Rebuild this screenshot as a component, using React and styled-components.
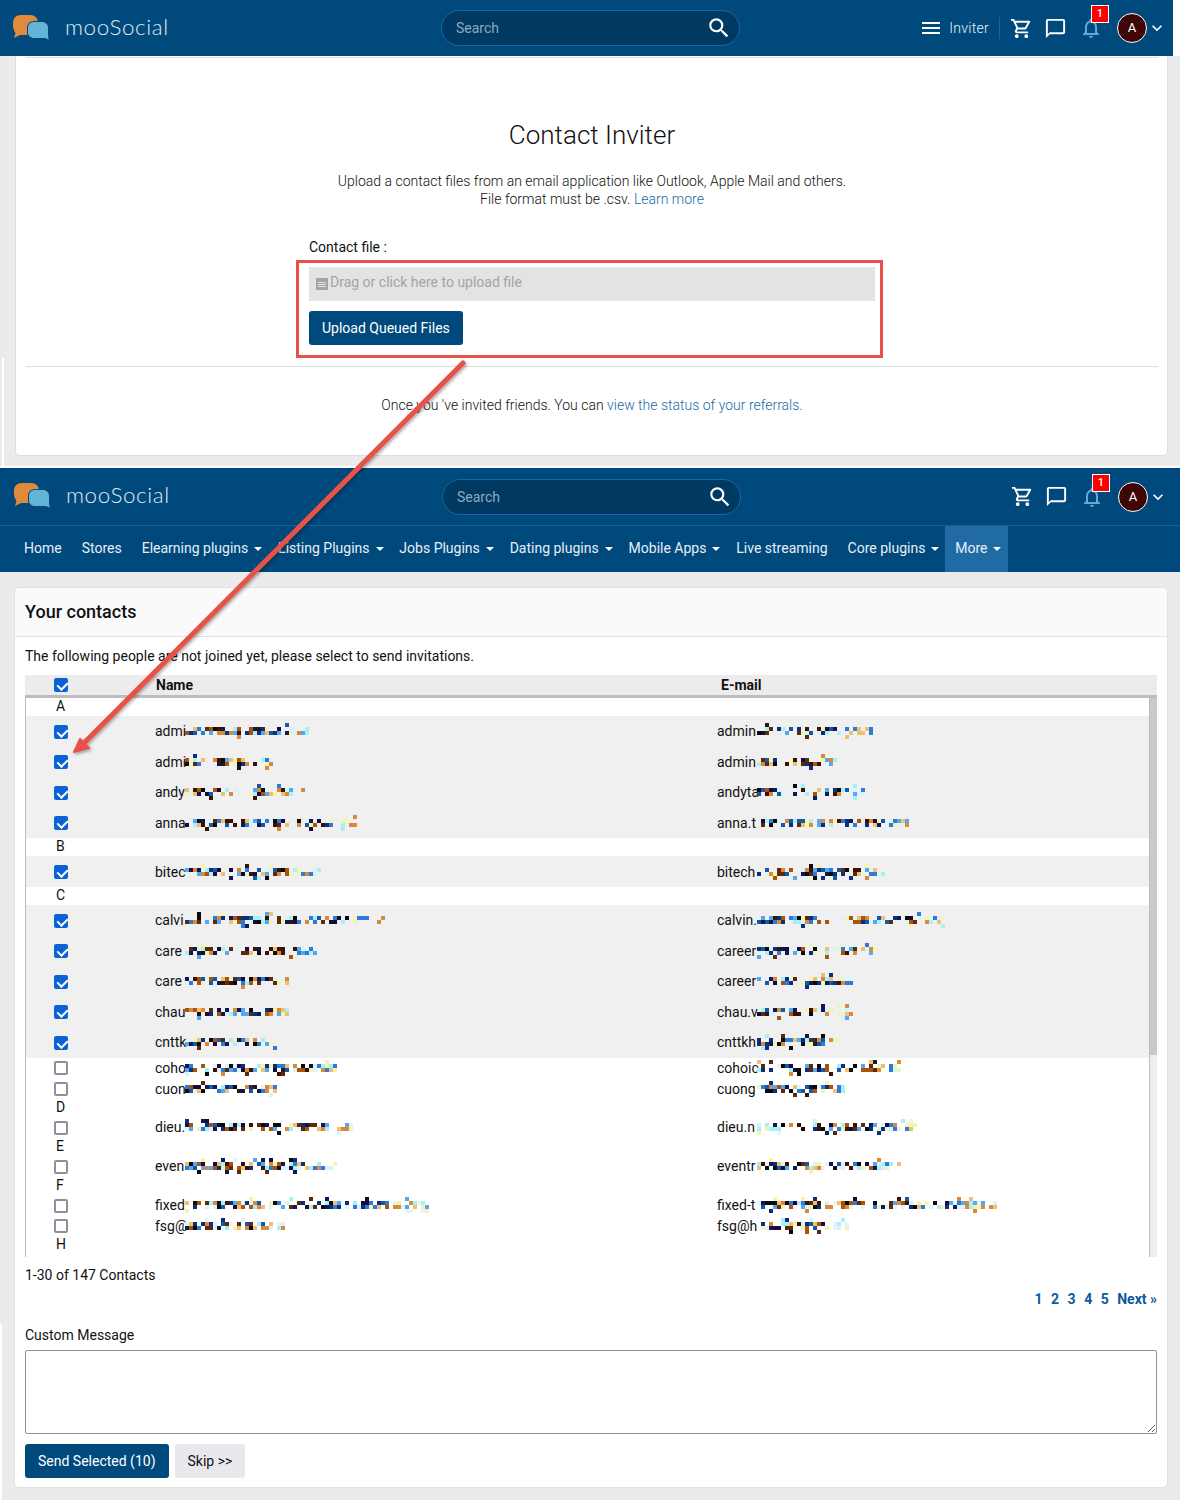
import React from 'react';
import styled, { createGlobalStyle } from 'styled-components';
import {
    MdMenu,
    MdOutlineShoppingCart,
    MdChatBubbleOutline,
    MdNotificationsNone,
    MdSearch,
    MdKeyboardArrowDown,
} from 'react-icons/md';

const navItems = [
    { label: 'Home' },
    { label: 'Stores' },
    { label: 'Elearning plugins', caret: true },
    { label: 'Listing Plugins', caret: true },
    { label: 'Jobs Plugins', caret: true },
    { label: 'Dating plugins', caret: true },
    { label: 'Mobile Apps', caret: true },
    { label: 'Live streaming' },
    { label: 'Core plugins', caret: true },
    { label: 'More', caret: true, active: true },
];

// g = group letter, otherwise visible name part + mosaic width, visible email part + mosaic width
const rows = [
    { g: 'A' },
    { n: 'admi', nw: 126, e: 'admin', ew: 116, on: true },
    { n: 'admi', nw: 88, e: 'admin', ew: 80, on: true },
    { n: 'andy', nw: 120, e: 'andyta', ew: 108, on: true },
    { n: 'anna', nw: 176, e: 'anna.t', ew: 152, on: true },
    { g: 'B' },
    { n: 'bitec', nw: 136, e: 'bitech', ew: 128, on: true },
    { g: 'C' },
    { n: 'calvi', nw: 200, e: 'calvin.', ew: 192, on: true },
    { n: 'care', nw: 132, e: 'career', ew: 120, on: true },
    { n: 'care', nw: 108, e: 'career', ew: 100, on: true },
    { n: 'chau', nw: 104, e: 'chau.v', ew: 96, on: true },
    { n: 'cnttk', nw: 92, e: 'cnttkh', ew: 80, on: true },
    { n: 'coho', nw: 152, e: 'cohoic', ew: 144 },
    { n: 'cuon', nw: 92, e: 'cuong', ew: 88 },
    { g: 'D' },
    { n: 'dieu.', nw: 168, e: 'dieu.n', ew: 160 },
    { g: 'E' },
    { n: 'even', nw: 152, e: 'eventr', ew: 144 },
    { g: 'F' },
    { n: 'fixed', nw: 244, e: 'fixed-t', ew: 240 },
    { n: 'fsg@', nw: 100, e: 'fsg@h', ew: 92 },
    { g: 'H' },
];

const darks = ['#0a1a55', '#1a0a3a', '#3a1205', '#0a0a0a', '#0b2f7a', '#1459a8', '#5c2a08', '#a8550a'];
const lights = ['#2c7bd6', '#55a8f0', '#d88a3a', '#f0c070', '#a8f0f8', '#d8f4f8', '#f4f4b0', '#e8f4f4'];

// the blurred part of names and addresses, pseudo random so each one differs
function Mosaic({ width, seed }) {
    let s = seed * 7919 + width * 31 + 17;
    const next = () => {
        s = (s * 16807) % 2147483647;
        return (s % 1000) / 1000;
    };
    const density = [0.07, 0.66, 0.72, 0.09];
    const cells = [];
    for (let y = 0; y < 4; y++) {
        for (let x = 0; x < width; x += 4) {
            const tail = x > width * 0.82;
            const pool = tail || next() < 0.45 ? lights : darks;
            const color = pool[Math.floor(next() * pool.length)];
            if (next() < density[y]) {
                cells.push(<rect key={x + '-' + y} x={x} y={y * 4} width="4" height="4" fill={color} />);
            }
        }
    }
    return (
        <MosaicSvg width={width} height="16" viewBox={`0 0 ${width} 16`}>
            {cells}
        </MosaicSvg>
    );
}

function Logo() {
    return (
        <svg width="37" height="27" viewBox="0 0 37 27">
            <path d="M8 0h9c5 0 8 3 8 8v4c0 5-3 8-8 8H7l-6 3 1.500-5C1 16 0 13 0 11V8c0-5 3-8 8-8z" fill="#e08a3c" />
            <path d="M21 6h8c4 0 7 3 7 6.500V19c0 1.500 0 4 1 7l-5-2H21c-4 0-7-3-7-6.500v-5C14 9 17 6 21 6z" fill="#00497d" />
            <path d="M21 7h8c3.500 0 6 2.500 6 5.500V19c0 1.500.3 3.500.8 5.500L32 23H21c-3.500 0-6-2.500-6-5.500v-5C15 9.500 17.500 7 21 7z" fill="#63b5d6" />
        </svg>
    );
}

function Header({ inviter, $second }) {
    return (
        <HeaderBar $second={$second}>
            <Brand>
                <Logo />
                <Wordmark>mooSocial</Wordmark>
            </Brand>
            <SearchBox>
                <SearchInput placeholder="Search" />
                <MdSearch size={26} color="#fff" />
            </SearchBox>
            <HeaderRight>
                {inviter && (
                    <InviterLink>
                        <MdMenu size={24} />
                        <span>Inviter</span>
                    </InviterLink>
                )}
                <IconLink $gap={11}><MdOutlineShoppingCart size={23} /></IconLink>
                <IconLink $gap={12}><MdChatBubbleOutline size={23} /></IconLink>
                <BellLink>
                    <MdNotificationsNone size={24} />
                    <Badge>1</Badge>
                </BellLink>
                <Avatar>A</Avatar>
                <MdKeyboardArrowDown size={20} color="#fff" />
            </HeaderRight>
        </HeaderBar>
    );
}

function ContactRow({ row, seed }) {
    return (
        <Row $on={row.on}>
            <CheckCell><Check type="checkbox" defaultChecked={!!row.on} /></CheckCell>
            <NameCell>
                <Prefix>{row.n}</Prefix>
                <Mosaic width={row.nw} seed={seed} />
            </NameCell>
            <EmailCell>
                <EmailPrefix>{row.e}</EmailPrefix>
                <Mosaic width={row.ew} seed={seed + 40} />
            </EmailCell>
        </Row>
    );
}

export default function App() {
    return (
        <Page>
            <GlobalStyle />
            <TopScreen>
                <Header inviter />
                <InviterCard>
                    <TopRule />
                    <InviterTitle>Contact Inviter</InviterTitle>
                    <Intro>
                        Upload a contact files from an email application like Outlook, Apple Mail and others.<br />
                        File format must be .csv. <TextLink>Learn more</TextLink>
                    </Intro>
                    <UploadForm>
                        <FieldLabel>Contact file :</FieldLabel>
                        <DropZone>
                            <FileIcon><i /><i /><i /></FileIcon>
                            Drag or click here to upload file
                        </DropZone>
                        <PrimaryButton>Upload Queued Files</PrimaryButton>
                        <RedOutline />
                    </UploadForm>
                    <Rule />
                    <StatusLine>
                        Once you 've invited friends. You can <TextLink>view the status of your referrals.</TextLink>
                    </StatusLine>
                </InviterCard>
            </TopScreen>

            <Header $second />
            <NavBar>
                {navItems.map((item) => (
                    <NavItem key={item.label} $active={item.active} $caret={item.caret}>
                        {item.label}
                        {item.caret && <Caret />}
                    </NavItem>
                ))}
            </NavBar>

            <ContactsCard>
                <CardHead>Your contacts</CardHead>
                <CardBody>
                    <Lead>The following people are not joined yet, please select to send invitations.</Lead>
                    <TableHead>
                        <CheckCell><Check type="checkbox" defaultChecked /></CheckCell>
                        <HeadName>Name</HeadName>
                        <HeadEmail>E-mail</HeadEmail>
                    </TableHead>
                    <ListBox>
                        <RowList>
                            {rows.map((row, i) =>
                                row.g ? (
                                    <GroupRow key={row.g}>{row.g}</GroupRow>
                                ) : (
                                    <ContactRow key={i} row={row} seed={i + 1} />
                                )
                            )}
                        </RowList>
                        <ScrollTrack><ScrollThumb /></ScrollTrack>
                    </ListBox>
                    <Count>1-30 of 147 Contacts</Count>
                    <Pager>
                        <a>1</a><a>2</a><a>3</a><a>4</a><a>5</a><a>Next »</a>
                    </Pager>
                    <MessageLabel>Custom Message</MessageLabel>
                    <MessageBox />
                    <Actions>
                        <PrimaryButton>Send Selected (10)</PrimaryButton>
                        <GreyButton>Skip &gt;&gt;</GreyButton>
                    </Actions>
                </CardBody>
            </ContactsCard>

            <Sliver $top={358} $height={108} $left={2} />
            <Sliver $top={1324} $height={176} $left={0} />
            <Annotation width="1180" height="1500" viewBox="0 0 1180 1500">
                <g filter="url(#arrow-shadow)">
                    <path d="M463 363 L82 745" stroke="#e8514a" strokeWidth="5" strokeLinecap="round" />
                    <path d="M74 752 L80 739 L89 748 Z" fill="#e8514a" stroke="#e8514a" strokeWidth="2" strokeLinejoin="round" />
                </g>
                <defs>
                    <filter id="arrow-shadow" x="-5%" y="-5%" width="110%" height="110%">
                        <feDropShadow dx="1.500" dy="1.500" stdDeviation="1.500" floodColor="#000" floodOpacity="0.35" />
                    </filter>
                </defs>
            </Annotation>
        </Page>
    );
}

const GlobalStyle = createGlobalStyle`
    html, body {
        margin: 0;
        background: #ebebeb;
    }
    * {
        box-sizing: border-box;
    }
    body {
        font-family: Roboto, "Liberation Sans", sans-serif;
        font-size: 14px;
        line-height: 18px;
        color: #111;
    }
`;

const Page = styled.div`
    position: relative;
    width: 1180px;
    height: 1500px;
    overflow: hidden;
`;

const TopScreen = styled.div`
    height: 468px;
    border-bottom: 2px solid #fff;
    background: linear-gradient(#fff 56px, #ebebeb 56px);
`;

const HeaderBar = styled.header`
    display: flex;
    align-items: center;
    height: ${(p) => (p.$second ? '58px' : '56px')};
    width: ${(p) => (p.$second ? '1180px' : '1173px')};
    padding: ${(p) => (p.$second ? '0 12px 0 14px' : '0 6px 0 13px')};
    background: #00497d;
    border-bottom: ${(p) => (p.$second ? '1px solid #1c5f92' : 'none')};
`;

const Brand = styled.div`
    display: flex;
    align-items: center;
    gap: 15px;
    width: 428px;
`;

const Wordmark = styled.span`
    padding-bottom: 3px;
    font-family: Lato, sans-serif;
    font-weight: 300;
    font-size: 22.400px;
    letter-spacing: 0.6px;
    color: #e2eaf0;
`;

const SearchBox = styled.div`
    display: flex;
    align-items: center;
    justify-content: space-between;
    width: 299px;
    height: 36px;
    padding: 0 7px 0 14px;
    background: #003a63;
    border: 1px solid #1c659e;
    border-radius: 18px;
`;

const SearchInput = styled.input`
    flex: 1;
    padding: 0;
    border: 0;
    outline: 0;
    background: transparent;
    font: 14px Roboto, sans-serif;
    color: #fff;
    &::placeholder {
        color: #8fa9bd;
        opacity: 1;
    }
`;

const HeaderRight = styled.div`
    display: flex;
    align-items: center;
    margin-left: auto;
    color: #fff;
`;

const InviterLink = styled.div`
    display: flex;
    align-items: center;
    gap: 6px;
    height: 22px;
    margin-right: 10px;
    padding-right: 10px;
    border-right: 1px solid #1c659e;
    color: #eef3f7;
    font-weight: 300;
    letter-spacing: 0.3px;
    svg {
        color: #fff;
    }
`;

const IconLink = styled.span`
    display: flex;
    margin-right: ${(p) => p.$gap}px;
`;

const BellLink = styled.span`
    position: relative;
    display: flex;
    margin-right: 14px;
    color: #6aa5d2;
`;

const Badge = styled.span`
    position: absolute;
    top: -11px;
    left: 12px;
    width: 18px;
    height: 18px;
    background: #f00;
    border: 1px solid #fff;
    color: #fff;
    font-size: 11px;
    line-height: 16px;
    font-weight: 500;
    text-align: center;
`;

const Avatar = styled.span`
    width: 30px;
    height: 30px;
    border-radius: 50%;
    background: #3f0606;
    border: 1px solid #fff;
    color: #fff;
    font-size: 13px;
    line-height: 28px;
    text-align: center;
`;

const InviterCard = styled.section`
    height: 400px;
    margin: 0 12px 0 15px;
    padding: 1px 9px 0 10px;
    background: #fff;
    border: 1px solid #ddd;
    border-top: 0;
    border-radius: 0 0 5px 5px;
`;

const TopRule = styled.div`
    height: 1px;
    background: #ddd;
`;

const InviterTitle = styled.h1`
    margin: 62px 0 0;
    font-size: 26px;
    line-height: 30px;
    font-weight: 300;
    text-align: center;
`;

const Intro = styled.p`
    margin: 22px 0 0;
    font-weight: 300;
    text-align: center;
`;

const TextLink = styled.a`
    color: #1a6aa5;
`;

const UploadForm = styled.div`
    position: relative;
    width: 566px;
    margin: 30px 0 0 283px;
`;

const FieldLabel = styled.div`
    margin-bottom: 11px;
`;

const DropZone = styled.div`
    display: flex;
    align-items: center;
    height: 34px;
    margin-bottom: 10px;
    padding: 0 7px 4px;
    background: #e3e3e3;
    color: #a4a4a4;
`;

const FileIcon = styled.span`
    display: flex;
    flex-direction: column;
    justify-content: center;
    gap: 1px;
    width: 12px;
    height: 12px;
    margin: 4px 2px 0 0;
    padding: 0 2px;
    background: #a4a4a4;
    i {
        height: 1px;
        background: #e3e3e3;
    }
`;

const PrimaryButton = styled.button`
    height: 34px;
    padding: 0 13px 1px;
    background: #00497d;
    border: 0;
    border-radius: 3px;
    color: #fff;
    font: 14px Roboto, sans-serif;
`;

const GreyButton = styled(PrimaryButton)`
    background: #e9e9ed;
    color: #111;
`;

const RedOutline = styled.div`
    position: absolute;
    left: -13px;
    right: -8px;
    top: 22px;
    bottom: -13px;
    border: 3px solid #e8514a;
`;

const Rule = styled.hr`
    height: 1px;
    margin: 21px 0 0;
    border: 0;
    background: #ddd;
`;

const StatusLine = styled.p`
    margin: 29px 0 0;
    font-weight: 300;
    text-align: center;
`;

const NavBar = styled.nav`
    display: flex;
    height: 46px;
    padding-left: 14px;
    background: #00497d;
`;

const NavItem = styled.a`
    display: flex;
    align-items: center;
    padding: ${(p) => (p.$active ? '0 7px 2px 10px' : p.$caret ? '0 5.850px 2px 10px' : '0 10px 2px')};
    background: ${(p) => (p.$active ? '#216ba5' : 'transparent')};
    color: #e8eff5;
`;

const Caret = styled.i`
    width: 0;
    height: 0;
    margin: 2px 0 0 6px;
    border-left: 4.500px solid transparent;
    border-right: 4.500px solid transparent;
    border-top: 4.500px solid #fff;
`;

const ContactsCard = styled.section`
    height: 901px;
    margin: 15px 12px 0 14px;
    background: #fff;
    border: 1px solid #e2e2e2;
    border-radius: 5px;
`;

const CardHead = styled.h2`
    height: 49px;
    margin: 0;
    padding: 0 10px;
    background: #fafafa;
    border-bottom: 1px solid #e2e2e2;
    border-radius: 5px 5px 0 0;
    font-size: 18px;
    line-height: 48px;
    font-weight: 500;
`;

const CardBody = styled.div`
    padding: 10px 10px 0;
`;

const Lead = styled.p`
    margin: 0 0 10px;
`;

const rowGrid = `
    display: grid;
    grid-template-columns: 70px 621px 1fr;
    align-items: center;
`;

const TableHead = styled.div`
    ${rowGrid}
    height: 23px;
    padding: 0 0 1px 1px;
    background: #ececec;
    border-bottom: 3px solid #bdbdbd;
    font-weight: 700;
    color: #111;
`;

const HeadName = styled.span`
    padding-left: 60px;
`;

const HeadEmail = styled.span`
    padding-left: 4px;
`;

const ListBox = styled.div`
    display: flex;
    height: 559px;
    border-left: 1px solid #bdbdbd;
    overflow: hidden;
`;

const RowList = styled.div`
    flex: 1;
    min-width: 0;
`;

const GroupRow = styled.div`
    height: 18.200px;
    padding-left: 30px;
    line-height: 17px;
`;

const Row = styled.div`
    ${rowGrid}
    height: ${(p) => (p.$on ? '30.500px' : '20.700px')};
    background: ${(p) => (p.$on ? '#f0f0f0' : '#fff')};
`;

const CheckCell = styled.div`
    display: flex;
    justify-content: center;
    padding-top: 1px;
`;

const Check = styled.input`
    appearance: none;
    position: relative;
    width: 14px;
    height: 14px;
    margin: 0;
    border: 2px solid #8f8f9d;
    border-radius: 2px;
    background: #fff;
    &:checked {
        border-color: #0b62d6;
        background: #0b62d6;
    }
    &:checked::after {
        content: '';
        position: absolute;
        left: 3px;
        top: 0;
        width: 5px;
        height: 8px;
        border: solid #fff;
        border-width: 0 2px 2px 0;
        transform: rotate(45deg);
    }
`;

const NameCell = styled.div`
    display: flex;
    align-items: center;
    padding-left: 59px;
`;

const EmailCell = styled.div`
    display: flex;
    align-items: center;
`;

const Prefix = styled.span`
    flex: none;
    width: 30px;
    white-space: nowrap;
`;

const EmailPrefix = styled(Prefix)`
    width: 40px;
`;

const MosaicSvg = styled.svg`
    display: block;
    flex: none;
`;

const ScrollTrack = styled.div`
    flex: none;
    width: 8px;
    background: #eee;
    border-left: 1px solid #bdbdbd;
`;

const ScrollThumb = styled.div`
    height: 357px;
    background: #c9c9c9;
`;

const Count = styled.div`
    margin-top: 9px;
`;

const Pager = styled.div`
    display: flex;
    justify-content: flex-end;
    gap: 8.500px;
    margin-top: 6px;
    font-weight: 700;
    color: #0b5a9c;
`;

const MessageLabel = styled.div`
    margin-top: 18px;
`;

const MessageBox = styled.textarea`
    display: block;
    width: 1132px;
    height: 84px;
    margin-top: 6px;
    border: 1px solid #8f8f9d;
    border-radius: 2px;
    outline: 0;
    background: #fff;
`;

const Actions = styled.div`
    display: flex;
    gap: 6px;
    margin-top: 10px;
`;

const Sliver = styled.div`
    position: absolute;
    left: ${(p) => p.$left}px;
    top: ${(p) => p.$top}px;
    width: 2px;
    height: ${(p) => p.$height}px;
    background: #fff;
`;

const Annotation = styled.svg`
    position: absolute;
    left: 0;
    top: 0;
    pointer-events: none;
`;
